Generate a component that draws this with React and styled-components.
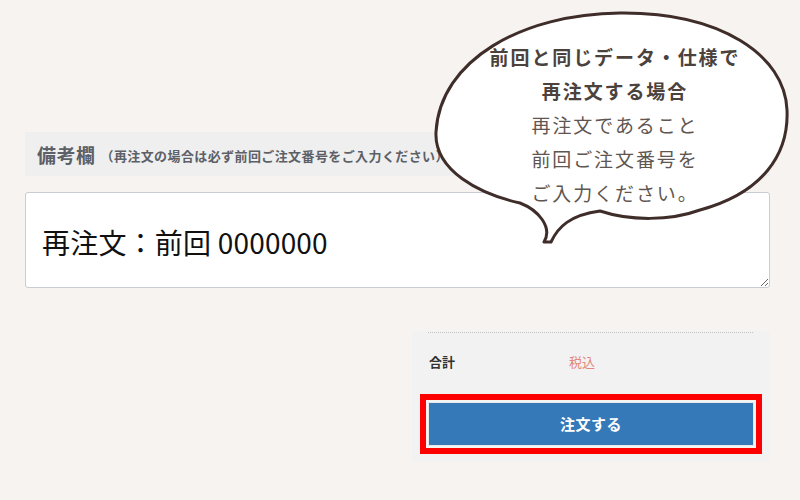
import React from "react";
import styled, { createGlobalStyle } from "styled-components";

const GlobalStyle = createGlobalStyle`
  html, body {
    margin: 0;
    padding: 0;
    background: #f6f3f0;
    font-family: "Noto Sans CJK JP", "Noto Sans", sans-serif;
  }
  * { box-sizing: border-box; }
`;

export default function App() {
  return (
    <>
      <GlobalStyle />
      <Page>
        <RemarksHeader>
          <RemarksTitle>備考欄</RemarksTitle>
          <RemarksNote>（再注文の場合は必ず前回ご注文番号をご入力ください）</RemarksNote>
        </RemarksHeader>
        <RemarksInput readOnly defaultValue="再注文：前回 0000000" />

        <Summary>
          <Divider />
          <TotalRow>
            <TotalLabel>合計</TotalLabel>
            <TaxNote>税込</TaxNote>
          </TotalRow>
          <Highlight>
            <OrderButton type="button">注文する</OrderButton>
          </Highlight>
        </Summary>

        <Bubble>
          <svg width="370" height="245" viewBox="0 0 370 245">
            <path
              d="M 170 206
                 C 200 216, 240 216, 270 205
                 C 332 188, 359 150, 357 105
                 C 355 50, 290 7, 190 8
                 C 92 9, 10 55, 6 127
                 C 4 166, 50 189, 90 198
                 C 108 205, 123 222, 114 237
                 L 121 237
                 C 128 222, 140 210, 170 206 Z"
              fill="#ffffff"
              stroke="#3f2d2a"
              strokeWidth="3"
              strokeLinejoin="round"
            />
          </svg>
          <BubbleText>
            <BubbleLine $bold>前回と同じデータ・仕様で</BubbleLine>
            <BubbleLine $bold>再注文する場合</BubbleLine>
            <BubbleLine>再注文であること</BubbleLine>
            <BubbleLine>前回ご注文番号を</BubbleLine>
            <BubbleLine>ご入力ください。</BubbleLine>
          </BubbleText>
        </Bubble>
      </Page>
    </>
  );
}

const Page = styled.div`
  position: relative;
  width: 800px;
  height: 500px;
  padding: 132px 30px 0 25px;
  display: flex;
  flex-direction: column;
  overflow: hidden;
`;

const RemarksHeader = styled.div`
  display: flex;
  align-items: center;
  height: 44px;
  padding-left: 12px;
  background: #efefef;
`;

const RemarksTitle = styled.span`
  font-size: 19px;
  font-weight: 700;
  color: #5c6067;
  letter-spacing: 0.5px;
  line-height: 1;
`;

const RemarksNote = styled.span`
  margin: 3px 0 0 5px;
  font-size: 13px;
  font-weight: 700;
  color: #5c6067;
  letter-spacing: 0.4px;
  line-height: 1;
  white-space: nowrap;
`;

const RemarksInput = styled.textarea`
  display: block;
  margin-top: 16px;
  width: 100%;
  height: 96px;
  padding: 29px 16px 0;
  border: 1px solid #c9cdd1;
  border-radius: 3px;
  background: #ffffff;
  font-family: "Noto Sans CJK JP", sans-serif;
  font-size: 28px;
  line-height: 40px;
  letter-spacing: 0.2px;
  color: #111;
  outline: none;
`;

const Summary = styled.div`
  align-self: flex-end;
  width: 358px;
  margin-top: 43px;
  padding: 0 0 8px;
  background: #f2f2f2;
`;

const Divider = styled.div`
  margin: 1px 17px 0 16px;
  border-top: 1px dotted #c4c4c4;
`;

const TotalRow = styled.div`
  display: flex;
  align-items: center;
  padding: 19px 0 23px 17px;
  line-height: 19px;
`;

const TotalLabel = styled.span`
  width: 140px;
  font-size: 13px;
  font-weight: 700;
  color: #333;
`;

const TaxNote = styled.span`
  font-size: 13px;
  color: #e3877c;
`;

const Highlight = styled.div`
  margin: 0 8px;
  border: 6px solid #ff0000;
  padding: 2px;
  background: #f4f4f4;
`;

const OrderButton = styled.button`
  display: block;
  width: 100%;
  height: 44px;
  padding: 0 0 2px;
  border: 1px solid #e9e9e9;
  background: #3579b8;
  color: #ffffff;
  font-family: "Noto Sans CJK JP", sans-serif;
  font-size: 15px;
  font-weight: 700;
  letter-spacing: 0.5px;
  cursor: pointer;
`;

const Bubble = styled.div`
  position: absolute;
  left: 430px;
  top: 5px;
  width: 370px;
  height: 245px;
  svg {
    display: block;
  }
`;

const BubbleText = styled.div`
  position: absolute;
  left: 0;
  top: 35px;
  width: 370px;
  display: flex;
  flex-direction: column;
  align-items: center;
`;

const BubbleLine = styled.div`
  font-size: 19px;
  line-height: 34px;
  letter-spacing: 1.9px;
  font-weight: ${(p) => (p.$bold ? 700 : 400)};
  color: ${(p) => (p.$bold ? "#4b423d" : "#5f5651")};
  white-space: nowrap;
`;
